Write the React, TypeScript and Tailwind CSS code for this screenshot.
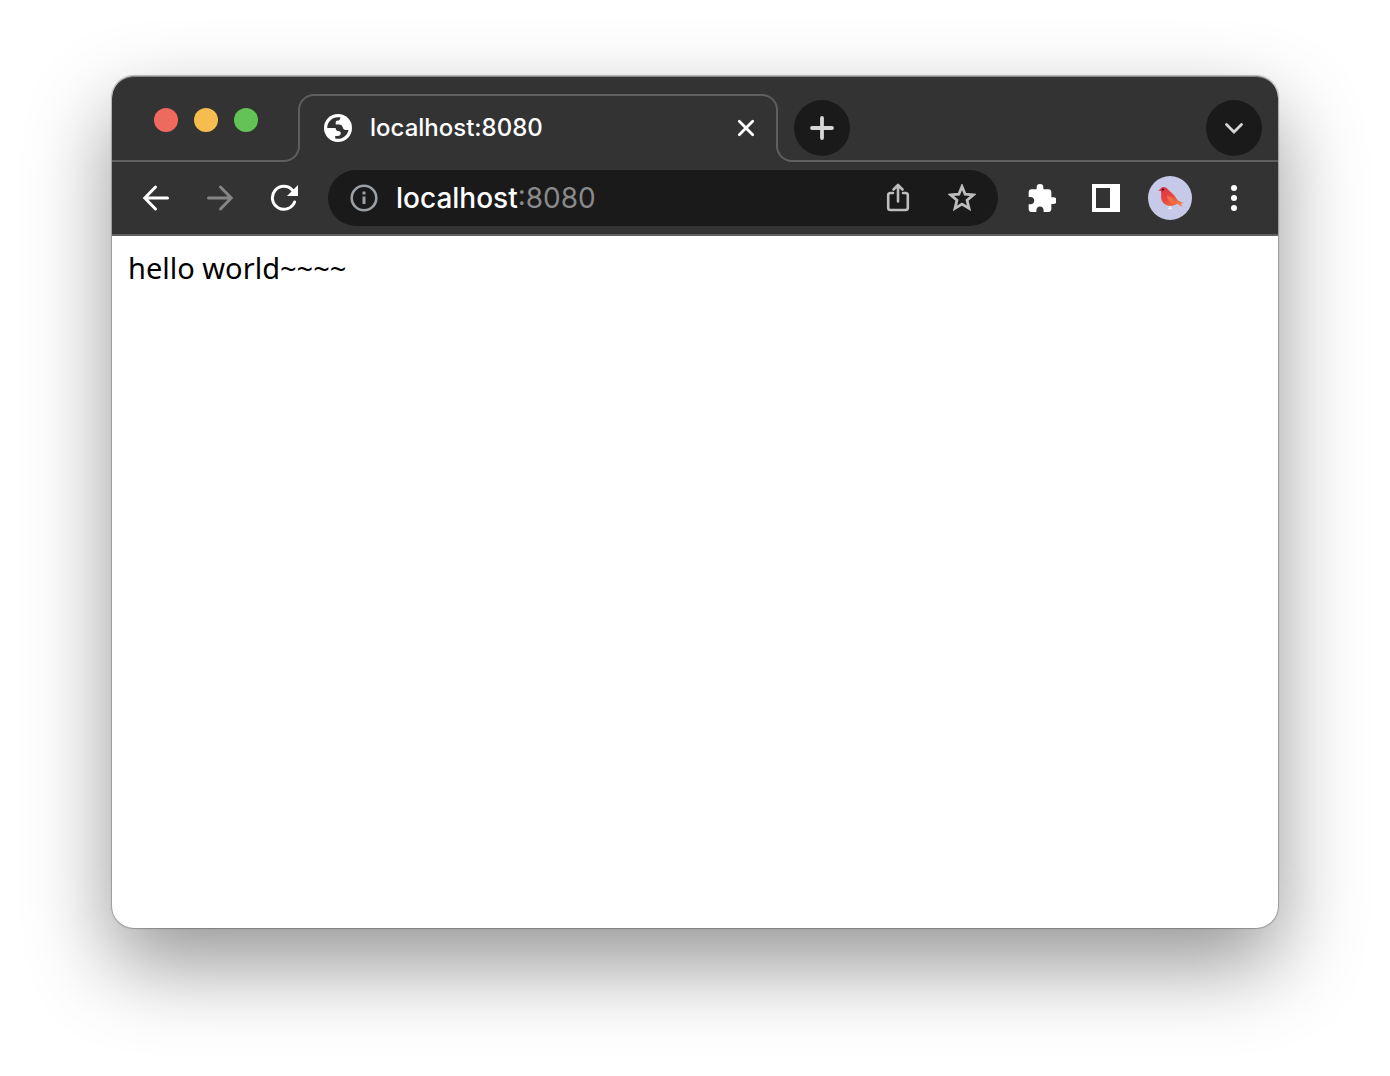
import type { ReactNode } from "react"

const lights = [
	{ label: "Close window", color: "bg-[#ee6a5f]" },
	{ label: "Minimize window", color: "bg-[#f5bd4f]" },
	{ label: "Zoom window", color: "bg-[#61c454]" },
]

function ToolbarButton({ label, children }: { label: string; children: ReactNode }) {
	return (
		<button type="button" aria-label={label} className="flex h-14 w-16 shrink-0 items-center justify-center">
			{children}
		</button>
	)
}

function GlobeIcon() {
	return (
		<svg viewBox="0 0 28 28" className="size-7 shrink-0">
			<circle cx="14" cy="14" r="14" fill="#fff" />
			<path
				d="M3.200 14C3.200 8.100 8 3.200 14 3.200c.900 0 1.700.100 2.500.300l-.800 1.900c-.300.800-1 1.200-1.800 1.200-1.500 0-2.200.900-2.200 2v1.900h2.500c3.400 0 4.300 1.600 4.800 3.600.300 1.200 1.200 1.800 2.500 1.800h3.100C23.500 20.800 19.200 24.800 14 24.800c-1 0-1.900-.100-2.800-.400V22h2.600c1.800 0 3-1.100 3-2.700s-1.200-2.400-2.800-2.400c-1.600 0-2.300-1.300-2.300-2.900z"
				fill="#333"
			/>
		</svg>
	)
}

function TabStrip() {
	return (
		<div className="flex h-[86px] items-end">
			<div className="flex h-full w-[172px] shrink-0 gap-4 border-b-2 border-[#5f5f5f] pt-8 pl-[42px]">
				{lights.map((light) => (
					<button
						key={light.label}
						type="button"
						aria-label={light.label}
						className={`size-6 rounded-full ${light.color}`}
					/>
				))}
			</div>
			<div className="-mr-0.5 size-4 shrink-0 rounded-br-[16px] border-r-2 border-b-2 border-[#5f5f5f]" />
			<div className="mb-4 flex h-[52px] w-[480px] min-w-0 items-center rounded-t-[16px] border-x-2 border-t-2 border-[#5f5f5f] pt-3.5 pr-5 pl-6">
				<GlobeIcon />
				<span className="ml-[18px] min-w-0 flex-1 truncate text-2xl font-medium text-white">localhost:8080</span>
				<button type="button" aria-label="Close tab" className="shrink-0">
					<svg viewBox="0 0 20 20" className="size-5" fill="none" stroke="#fff" strokeWidth="2.800" strokeLinecap="round">
						<path d="M3.300 3.300 16.700 16.700M16.700 3.300 3.300 16.700" />
					</svg>
				</button>
			</div>
			<div className="-ml-0.5 size-4 shrink-0 rounded-bl-[16px] border-b-2 border-l-2 border-[#5f5f5f]" />
			<div className="flex h-full flex-1 items-start justify-between border-b-2 border-[#5f5f5f] pt-6 pr-4 pl-0.5">
				<button
					type="button"
					aria-label="New tab"
					className="flex size-14 shrink-0 items-center justify-center rounded-full bg-[#1a1a1a]"
				>
					<svg viewBox="0 0 24 24" className="size-6" fill="none" stroke="#d6d6d6" strokeWidth="3.800" strokeLinecap="round">
						<path d="M12 2v20M2 12h20" />
					</svg>
				</button>
				<button
					type="button"
					aria-label="Search tabs"
					className="flex size-14 shrink-0 items-center justify-center rounded-full bg-[#1a1a1a]"
				>
					<svg viewBox="0 0 20 20" className="size-5" fill="none" stroke="#d6d6d6" strokeWidth="2.800" strokeLinecap="round">
						<path d="M2.500 6.500 10 14l7.500-7.500" />
					</svg>
				</button>
			</div>
		</div>
	)
}

function AddressBar() {
	return (
		<div className="mx-3 flex h-14 min-w-0 flex-1 items-center rounded-full bg-[#1a1a1a] pr-1 pl-[22px]">
			<button type="button" aria-label="View site information" className="shrink-0">
				<svg viewBox="0 0 28 28" className="size-7" fill="none" stroke="#9aa0a6">
					<circle cx="14" cy="14" r="12.300" strokeWidth="2.600" />
					<path d="M14 12.500V20M14 7.500v3" strokeWidth="3" />
				</svg>
			</button>
			<label className="ml-[18px] flex min-w-0 flex-1 items-center text-[28px] leading-9 font-medium text-[#8a8a8a]">
				<input
					aria-label="Address"
					defaultValue="localhost"
					className="field-sizing-content min-w-0 bg-transparent p-0 text-white outline-none"
				/>
				<span className="font-normal">:8080</span>
			</label>
			<ToolbarButton label="Share this page">
				<svg viewBox="0 0 28 32" className="h-8 w-7" fill="none" stroke="#bdbdbd" strokeWidth="2.600">
					<path
						d="M9 11H6.500C4.800 11 4.200 12 4.200 13.300v12.400c0 1.500.800 2.300 2.300 2.300h15c1.500 0 2.300-.800 2.300-2.300V13.300c0-1.500-.800-2.300-2.300-2.300H19M14 19.500V3.500M9.500 7.500 14 3l4.500 4.500"
						strokeLinecap="round"
						strokeLinejoin="round"
					/>
				</svg>
			</ToolbarButton>
			<ToolbarButton label="Bookmark this tab">
				<svg viewBox="1 1 26 26" className="size-7" fill="none" stroke="#bdbdbd" strokeWidth="2.600">
					<path d="M14 3.300l2.900 7.200 7.700.600-5.900 5 1.800 7.500L14 19.600l-6.500 4 1.800-7.500-5.900-5 7.700-.600z" />
				</svg>
			</ToolbarButton>
		</div>
	)
}

function BirdAvatar() {
	return (
		<svg viewBox="0 0 44 44" className="size-11">
			<defs>
				<linearGradient id="bird" x1="0" y1="0" x2="1" y2="1">
					<stop offset="0" stopColor="#dc2f45" />
					<stop offset="0.500" stopColor="#e9483f" />
					<stop offset="1" stopColor="#f2934f" />
				</linearGradient>
			</defs>
			<circle cx="22" cy="22" r="22" fill="#c6c9e8" />
			<path d="M22 29v4M20 32.500h4" stroke="#eef0f8" strokeWidth="1.500" />
			<path
				d="M10 14.500l2.200-1.300C13 11.500 15 10.600 17 11.200c2.400.700 3.500 2.800 5.500 4.600 3 2.700 5.300 5.200 7.300 8.700l6.200 2.700-3.200.400 2 3.600-5.800-3.400c-1.600 1.600-4.400 2.400-7.400 2.100-5.400-.600-8.600-4.500-8.500-9.400.100-2 .300-3.900-.300-5.400z"
				fill="url(#bird)"
			/>
			<path d="M19 19.500c3.500 1 7 3.500 9.500 7l-4.500.800c-2.800-1.600-4.800-4.300-5-7.800z" fill="#ef7048" />
			<circle cx="15" cy="13.600" r="1.100" fill="#301018" />
		</svg>
	)
}

function Toolbar() {
	return (
		<div className="flex h-[74px] items-center border-b-2 border-[#5f5f5f] px-3">
			<ToolbarButton label="Back">
				<svg viewBox="0 0 28 28" className="size-7" fill="none" stroke="#fff" strokeWidth="3" strokeLinecap="round">
					<path d="M25.500 14H3M13.500 3 2.800 14l10.700 11" />
				</svg>
			</ToolbarButton>
			<ToolbarButton label="Forward">
				<svg viewBox="0 0 28 28" className="size-7" fill="none" stroke="#858585" strokeWidth="3" strokeLinecap="round">
					<path d="M2.500 14H25M14.500 3l10.700 11-10.700 11" />
				</svg>
			</ToolbarButton>
			<ToolbarButton label="Reload">
				<svg viewBox="0 0 28 28" className="size-7">
					<path
						d="M24.600 18A11.500 11.500 0 1 1 22.500 6.200"
						fill="none"
						stroke="#fff"
						strokeWidth="3"
						strokeLinecap="round"
					/>
					<path d="M28 1v11H17z" fill="#fff" />
				</svg>
			</ToolbarButton>
			<AddressBar />
			<ToolbarButton label="Extensions">
				<svg viewBox="1.500 1 21 21" className="size-7" fill="#fff">
					<path d="M20.500 11H19V7c0-1.100-.900-2-2-2h-4V3.500a2.500 2.500 0 0 0-5 0V5H4c-1.100 0-2 .900-2 2v3.800h1.500c1.490 0 2.700 1.210 2.700 2.700s-1.210 2.700-2.700 2.700H2V20c0 1.100.900 2 2 2h3.800v-1.500c0-1.490 1.210-2.700 2.700-2.700s2.700 1.210 2.700 2.700V22H17c1.100 0 2-.900 2-2v-4h1.500a2.500 2.500 0 0 0 0-5z" />
				</svg>
			</ToolbarButton>
			<ToolbarButton label="Show side panel">
				<svg viewBox="0 0 28 28" className="size-7">
					<path d="M0 0h28v28H0zM4 4v20h14V4z" fill="#fff" fillRule="evenodd" />
				</svg>
			</ToolbarButton>
			<ToolbarButton label="Profile">
				<BirdAvatar />
			</ToolbarButton>
			<ToolbarButton label="Menu">
				<svg viewBox="0 0 28 28" className="size-7" fill="#fff">
					<circle cx="14" cy="4" r="3" />
					<circle cx="14" cy="14" r="3" />
					<circle cx="14" cy="24" r="3" />
				</svg>
			</ToolbarButton>
		</div>
	)
}

export default function App() {
	return (
		<div className="flex min-h-screen flex-col bg-white px-28 pt-19 pb-37 font-['Inter',sans-serif]">
			<div className="flex flex-1 flex-col overflow-hidden rounded-[22px] bg-white shadow-[0_0_1px_1px_rgba(0,0,0,0.25),0_36px_84px_rgba(0,0,0,0.42)]">
				<header className="rounded-t-[22px] bg-[#333] shadow-[inset_0_2px_0_-1px_#858585]">
					<TabStrip />
					<Toolbar />
				</header>
				<main className="flex-1 px-4 py-3.5 font-['Noto_Sans',sans-serif] text-[29px] leading-9 text-black">
					hello world~~~~
				</main>
			</div>
		</div>
	)
}
